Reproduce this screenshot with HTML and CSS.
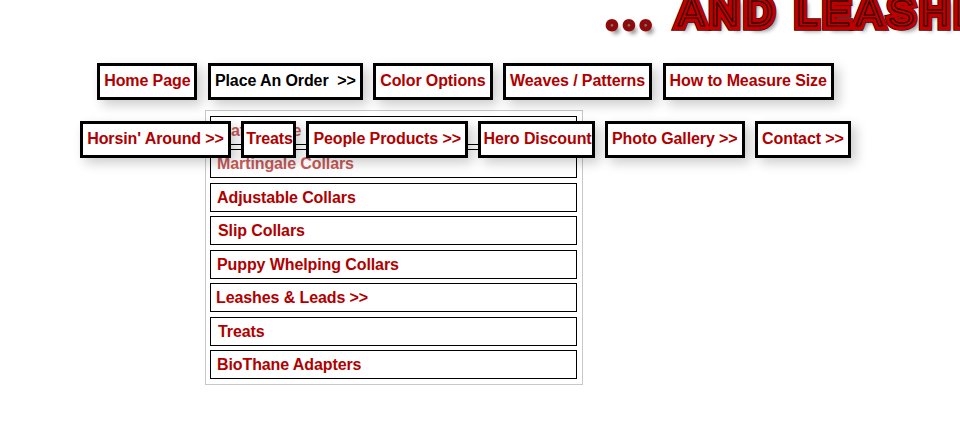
FILE: index.html
```html
<!DOCTYPE html>
<html lang="en">
<head>
  <meta charset="UTF-8">
  <meta name="viewport" content="width=device-width, initial-scale=1.0">
  <title>... And Leashes</title>
  <link rel="stylesheet" href="styles.css">
</head>
<body>
  <div class="banner">
    <span class="banner-dots">...</span>
    <span class="banner-text" data-text="AND LEASHES">AND LEASHES</span>
  </div>

  <nav class="menu">
    <div class="menu-row">
      <a class="btn" href="#">Home Page</a>
      <a class="btn active" href="#">Place An Order &nbsp;&gt;&gt;</a>
      <a class="btn" href="#">Color Options</a>
      <a class="btn" href="#">Weaves / Patterns</a>
      <a class="btn" href="#">How to Measure Size</a>
    </div>
    <div class="menu-row">
      <a class="btn" href="#">Horsin' Around &gt;&gt;</a>
      <a class="btn tight" href="#">Treats</a>
      <a class="btn" href="#">People Products &gt;&gt;</a>
      <a class="btn tight" href="#">Hero Discount</a>
      <a class="btn" href="#">Photo Gallery &gt;&gt;</a>
      <a class="btn" href="#">Contact &gt;&gt;</a>
    </div>
  </nav>

  <!-- dropdown of Place An Order, sits under the second row -->
  <div class="dropdown">
    <a class="drop-item faded" href="#">Flat Buckle Collars</a>
    <a class="drop-item faded" href="#">Martingale Collars</a>
    <a class="drop-item" href="#">Adjustable Collars</a>
    <a class="drop-item wide" href="#">Slip Collars</a>
    <a class="drop-item" href="#">Puppy Whelping Collars</a>
    <a class="drop-item narrow" href="#">Leashes &amp; Leads &gt;&gt;</a>
    <a class="drop-item wide" href="#">Treats</a>
    <a class="drop-item" href="#">BioThane Adapters</a>
  </div>
</body>
</html>
```

FILE: styles.css
```css
html, body {
  height: 100%;
}
body {
  margin: 0;
  background: #fff;
  overflow: hidden;
  font-family: "Liberation Sans", Arial, sans-serif;
}
a {
  text-decoration: none;
}
.banner {
  height: 63px;
  overflow: hidden;
  display: flex;
  align-items: flex-start;
  padding-left: 606px;
  box-sizing: border-box;
}
.banner-dots {
  margin-top: -15px;
  font-family: Lato, sans-serif;
  font-size: 50px;
  line-height: 50px;
  font-weight: bold;
  letter-spacing: 5px;
  color: #777;
  -webkit-text-stroke: 5px #8f0a0a;
  text-shadow: 4px 5px 4px #888;
}
.banner-text {
  position: relative;
  margin-top: -11px;
  margin-left: 21px;
  font-family: "Liberation Sans Narrow", "Liberation Sans", sans-serif;
  font-size: 40px;
  line-height: 46px;
  letter-spacing: 5.6px;
  white-space: nowrap;
  color: #400;
  -webkit-text-stroke: 9.5px #400;
  text-shadow: 5px 5px 4px #777;
}
.banner-text::before,
.banner-text::after {
  content: attr(data-text);
  position: absolute;
  left: 0;
  top: 0;
  text-shadow: none;
}
.banner-text::before {
  color: #c00000;
  -webkit-text-stroke: 8px #c00000;
}
.banner-text::after {
  color: #c00000;
  -webkit-text-stroke: 1.2px #200;
}
.menu {
  position: relative;
  z-index: 2;
  display: flex;
  flex-direction: column;
  gap: 21px;
}
.menu-row {
  display: flex;
  justify-content: center;
  gap: 10.5px;
  padding-right: 29px;
}
.btn {
  box-sizing: border-box;
  height: 37px;
  padding: 0 4px;
  border: 3px solid #000;
  background: #fff;
  color: #b00000;
  font-size: 16px;
  font-weight: bold;
  letter-spacing: -0.1px;
  line-height: 30px;
  white-space: nowrap;
  box-shadow: 5px 5px 12px rgba(0, 0, 0, 0.2);
}
.btn.active {
  color: #000;
}
.btn.tight {
  padding: 0 0 0 2px;
}
.dropdown {
  position: absolute;
  z-index: 1;
  left: 205px;
  top: 110px;
  width: 378px;
  height: 275px;
  box-sizing: border-box;
  padding: 4.8px 5px 5px 4px;
  border: 1px solid #c8c8c8;
  display: flex;
  flex-direction: column;
  gap: 4.5px;
  background: #fff;
}
.drop-item {
  box-sizing: border-box;
  flex: none;
  height: 29px;
  padding-left: 6px;
  border: 1px solid #000;
  color: #b00000;
  font-size: 16px;
  font-weight: bold;
  letter-spacing: -0.1px;
  line-height: 27px;
}
.drop-item.faded {
  color: #c65a5a;
}
.drop-item.wide {
  padding-left: 7px;
}
.drop-item.narrow {
  padding-left: 5px;
}
```
